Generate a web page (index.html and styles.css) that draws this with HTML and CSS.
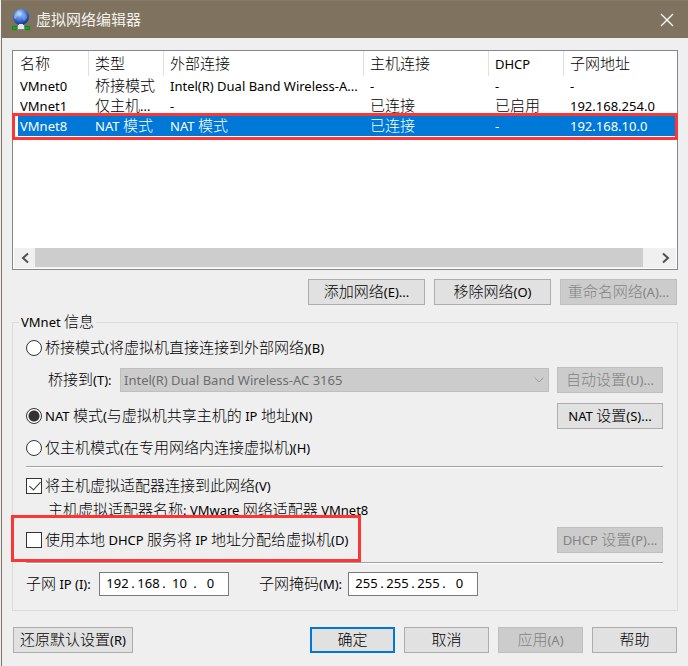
FILE: index.html
```html
<!DOCTYPE html>
<html lang="zh-CN">
<head>
<meta charset="utf-8">
<title>虚拟网络编辑器</title>
<link rel="stylesheet" href="styles.css">
</head>
<body>
<div class="window">
  <header class="titlebar">
    <svg class="app-icon" width="20" height="22" viewBox="0 0 20 22" aria-hidden="true">
      <defs>
        <radialGradient id="globe" cx="0.42" cy="0.3" r="0.65">
          <stop offset="0" stop-color="#d3e6ff"/>
          <stop offset="0.35" stop-color="#6d9ceb"/>
          <stop offset="0.75" stop-color="#2f5fc4"/>
          <stop offset="1" stop-color="#183c94"/>
        </radialGradient>
      </defs>
      <rect x="1" y="17" width="18" height="4" fill="#0a8a12"/>
      <rect x="2" y="18" width="16" height="2" fill="#14a81c"/>
      <rect x="6" y="17" width="8" height="4" fill="#7f8580"/>
      <path d="M8 13h4v3h1v4H7v-4h1z" fill="#e4e8ea"/>
      <circle cx="10" cy="8" r="8" fill="url(#globe)"/>
      <path d="M4 5l3-3 3 1-1 3-3 1-1 3-2-1z" fill="#b6d0fa" opacity=".55"/>
      <path d="M12 4l3 1 1 4-3 3-2-3z" fill="#8bb1f1" opacity=".5"/>
      <path d="M8 15h4v4H8z" fill="#e4e8ea"/>
    </svg>
    <h1>虚拟网络编辑器</h1>
    <button class="close" aria-label="关闭">
      <svg width="14" height="14" viewBox="0 0 14 14"><path d="M1 1l12 12M13 1L1 13" stroke="#fff" stroke-width="1.3"/></svg>
    </button>
  </header>

  <main class="content">
    <div class="list">
      <table>
        <colgroup><col class="c-name"><col class="c-type"><col class="c-ext"><col class="c-host"><col class="c-dhcp"><col></colgroup>
        <thead>
          <tr><th>名称</th><th>类型</th><th>外部连接</th><th>主机连接</th><th><span class="l">DHCP</span></th><th>子网地址</th></tr>
        </thead>
        <tbody>
          <tr><td><span class="l">VMnet0</span></td><td>桥接模式</td><td><span class="l">Intel(R) Dual Band Wireless-A...</span></td><td><span class="l">-</span></td><td><span class="l">-</span></td><td><span class="l">-</span></td></tr>
          <tr><td><span class="l">VMnet1</span></td><td>仅主机<span class="l">...</span></td><td><span class="l">-</span></td><td>已连接</td><td>已启用</td><td><span class="l">192.168.254.0</span></td></tr>
          <tr class="selected"><td><span class="l">VMnet8</span></td><td><span class="l">NAT </span>模式</td><td><span class="l">NAT </span>模式</td><td>已连接</td><td><span class="l">-</span></td><td><span class="l">192.168.10.0</span></td></tr>
        </tbody>
      </table>
      <div class="row-mark"></div>
      <div class="scrollbar">
        <button aria-label="向左滚动"><svg width="8" height="12" viewBox="0 0 8 12"><path d="M7 1.500L2 6l5 4.500" fill="none" stroke="#505050" stroke-width="2"/></svg></button>
        <div class="track"><div class="thumb"></div></div>
        <button aria-label="向右滚动"><svg width="8" height="12" viewBox="0 0 8 12"><path d="M1 1.500L6 6l-5 4.500" fill="none" stroke="#505050" stroke-width="2"/></svg></button>
      </div>
    </div>

    <div class="actions">
      <button class="btn wide">添加网络<span class="l">(E)...</span></button>
      <button class="btn wide">移除网络<span class="l">(O)</span></button>
      <button class="btn wide" disabled>重命名网络<span class="l">(A)...</span></button>
    </div>

    <fieldset class="group">
      <legend><span class="l">VMnet </span>信息</legend>

      <div class="row">
        <label class="option"><input type="radio" name="mode"><span>桥接模式<span class="l">(</span>将虚拟机直接连接到外部网络<span class="l">)(B)</span></span></label>
      </div>
      <div class="row bridge">
        <label for="bridge">桥接到<span class="l">(T):</span></label>
        <div class="combo">
          <select id="bridge" disabled><option>Intel(R) Dual Band Wireless-AC 3165</option></select>
          <svg width="10" height="6" viewBox="0 0 10 6" aria-hidden="true"><path d="M.5.5L5 5 9.500.5" fill="none" stroke="#9a9a9a"/></svg>
        </div>
        <button class="btn side" disabled>自动设置<span class="l">(U)...</span></button>
      </div>
      <div class="row nat">
        <label class="option"><input type="radio" name="mode" checked><span><span class="l">NAT </span>模式<span class="l">(</span>与虚拟机共享主机的<span class="l"> IP </span>地址<span class="l">)(N)</span></span></label>
        <button class="btn side"><span class="l">NAT </span>设置<span class="l">(S)...</span></button>
      </div>
      <div class="row host">
        <label class="option"><input type="radio" name="mode"><span>仅主机模式<span class="l">(</span>在专用网络内连接虚拟机<span class="l">)(H)</span></span></label>
      </div>
      <hr>
      <div class="row">
        <label class="option"><input type="checkbox" checked><span>将主机虚拟适配器连接到此网络<span class="l">(V)</span></span></label>
      </div>
      <p class="adapter">主机虚拟适配器名称<span class="l">: VMware </span>网络适配器<span class="l"> VMnet8</span></p>
      <div class="row dhcp">
        <label class="option"><input type="checkbox"><span>使用本地<span class="l"> DHCP </span>服务将<span class="l"> IP </span>地址分配给虚拟机<span class="l">(D)</span></span></label>
        <button class="btn side" disabled><span class="l">DHCP </span>设置<span class="l">(P)...</span></button>
        <div class="dhcp-mark"></div>
      </div>
      <hr>
      <div class="subnet">
        <label class="ip-label" for="ip1">子网<span class="l"> IP (I):</span></label>
        <div class="ip">
          <input id="ip1" value="192"><i>.</i><input aria-label="IP 2" value="168"><i>.</i><input aria-label="IP 3" value="10"><i>.</i><input aria-label="IP 4" value="0">
        </div>
        <label class="mask-label" for="mask1">子网掩码<span class="l">(M):</span></label>
        <div class="ip">
          <input id="mask1" value="255"><i>.</i><input aria-label="掩码 2" value="255"><i>.</i><input aria-label="掩码 3" value="255"><i>.</i><input aria-label="掩码 4" value="0">
        </div>
      </div>
    </fieldset>

    <footer class="footer">
      <button class="btn restore">还原默认设置<span class="l">(R)</span></button>
      <button class="btn dialog primary">确定</button>
      <button class="btn dialog">取消</button>
      <button class="btn dialog" disabled>应用<span class="l">(A)</span></button>
      <button class="btn dialog">帮助</button>
    </footer>
  </main>
</div>
</body>
</html>
```
FILE: styles.css
```css
* { box-sizing: border-box; }

html { background: #c9c9c9; }

body {
  margin: 0;
  background: #efefef;
  color: #000;
  font: 300 15px/20px "Noto Sans CJK SC", sans-serif;
}

button, input, select { font: inherit; color: inherit; }

.l {
  font-family: "Noto Sans", "Noto Sans CJK SC", sans-serif;
  font-size: 13px;
  font-weight: 400;
  line-height: 13px;
  white-space: pre;
}

.window {
  min-height: 100vh;
  margin-left: 1px;
  border-left: 1px solid #7f735f;
}

.titlebar {
  display: flex;
  align-items: center;
  gap: 5px;
  height: 38px;
  padding: 0 14px 0 9px;
  background: #7f735f;
  border-top: 1px solid #877b68;
  color: #f4f2ef;
}

.titlebar h1 {
  flex: 1;
  margin: 0;
  padding-bottom: 2px;
  font-size: 15px;
  font-weight: 400;
  line-height: 20px;
}

.close {
  display: flex;
  padding: 0;
  border: 0;
  background: none;
}

.content { padding: 12px 10px; }

.list {
  position: relative;
  display: flex;
  flex-direction: column;
  height: 220px;
  border: 1px solid #828790;
  background: #fff;
}

table {
  width: 100%;
  table-layout: fixed;
  border-collapse: collapse;
}

.c-name, .c-type, .c-dhcp { width: 75px; }
.c-ext { width: 200px; }
.c-host { width: 125px; }

th, td {
  height: 20px;
  padding: 0 0 2px 7px;
  font-weight: inherit;
  text-align: left;
  line-height: 18px;
  white-space: nowrap;
}

th {
  height: 25px;
  line-height: 22px;
}

th + th { background: linear-gradient(#e0e0e0, #e0e0e0) left / 1px 100% no-repeat; }

.selected td { background: #0078d7; color: #fff; }

.row-mark {
  position: absolute;
  top: 62px;
  left: -1px;
  right: -1px;
  height: 27px;
  border: 3px solid #fd3535;
  box-shadow: inset 3px 0 #fff, inset 0 -1px #fff;
}

.scrollbar {
  display: flex;
  height: 20px;
  margin: auto 1px 1px;
  background: #f0f0f0;
}

.scrollbar button {
  display: flex;
  align-items: center;
  justify-content: center;
  width: 21px;
  padding: 0;
  border: 0;
  background: none;
}

.track { flex: 1; padding-right: 12px; }
.thumb { height: 19px; background: #cdcdcd; }

.actions {
  display: flex;
  justify-content: flex-end;
  gap: 9px;
  padding: 9px 1px 0;
}

.btn {
  height: 26px;
  padding: 0 0 2px;
  border: 1px solid #adadad;
  border-radius: 0;
  background: #e1e1e1;
  line-height: 20px;
  white-space: nowrap;
}

.btn:disabled {
  border-color: #bfbfbf;
  background: #ccc;
  color: #838383;
}

.wide { width: 117px; }
.side { width: 106px; margin-left: auto; }
.dialog { width: 85px; }
.btn.primary { border: 2px solid #0078d7; margin-left: auto; }
.restore { width: 120px; }

.group {
  min-width: 0;
  margin: 7px 0 0;
  padding: 3px 14px 14px 13px;
  border: 1px solid #dcdcdc;
}

.group legend {
  margin-left: -7px;
  padding: 0 2px 2px;
  line-height: 18px;
}

.row {
  position: relative;
  display: flex;
  align-items: center;
  height: 26px;
}

.bridge { margin-top: 6px; padding-left: 22px; }
.bridge label { width: 72px; padding-bottom: 2px; white-space: nowrap; }
.nat { margin-top: 10px; }
.host { margin-top: 6px; }

.option {
  display: flex;
  align-items: center;
  gap: 3px;
  white-space: nowrap;
}

.option > span { padding-bottom: 2px; }

.option input {
  appearance: none;
  flex: none;
  width: 16px;
  height: 16px;
  margin: 0;
  border: 1px solid #333;
  background: #fff;
}

.option input[type="radio"] { border-radius: 50%; }

.option input[type="radio"]:checked {
  background: radial-gradient(circle, #333 0 5px, #fff 6px);
}

.option input[type="checkbox"]:checked::before {
  content: "";
  display: block;
  width: 5px;
  height: 10px;
  margin: 0 0 0 5px;
  border: solid #333;
  border-width: 0 1px 1px 0;
  transform: rotate(42deg);
}

.combo {
  position: relative;
  flex: 1;
  margin-right: 8px;
}

.combo select {
  appearance: none;
  display: block;
  width: 100%;
  height: 24px;
  padding: 0 20px 0 3px;
  border: 1px solid #bfbfbf;
  border-radius: 0;
  background: #ccc;
  color: #6d6d6d;
  font-family: "Noto Sans", sans-serif;
  font-size: 13px;
  font-weight: 400;
  line-height: 20px;
  opacity: 1;
}

.combo svg {
  position: absolute;
  top: 9px;
  right: 5px;
}

hr {
  height: 2px;
  margin: 5px 0;
  border: 0;
  border-top: 1px solid #a0a0a0;
  border-bottom: 1px solid #fff;
}

.adapter { margin: 0 0 8px 22px; white-space: nowrap; }

.dhcp { margin-bottom: 9px; }

.dhcp-mark {
  position: absolute;
  top: -12px;
  left: -15px;
  width: 350px;
  height: 47px;
  border: 3px solid #fd3535;
  pointer-events: none;
}

.subnet {
  display: flex;
  align-items: center;
  margin-top: 8px;
  white-space: nowrap;
}

.subnet label { padding-bottom: 2px; }
.ip-label { width: 73px; }
.mask-label { width: 89px; margin-left: 30px; }

.ip {
  display: flex;
  align-items: center;
  width: 130px;
  height: 24px;
  padding: 0 0 2px 4px;
  border: 1px solid #7a7a7a;
  background: #fff;
  font: 13px/20px "Noto Sans", sans-serif;
}

.ip input {
  width: 27px;
  height: 20px;
  padding: 0;
  border: 0;
  background: none;
  text-align: center;
}

.ip i {
  width: 4px;
  font-style: normal;
  text-align: center;
}

.footer {
  display: flex;
  gap: 9px;
  padding: 16px 1px 0;
}
```
